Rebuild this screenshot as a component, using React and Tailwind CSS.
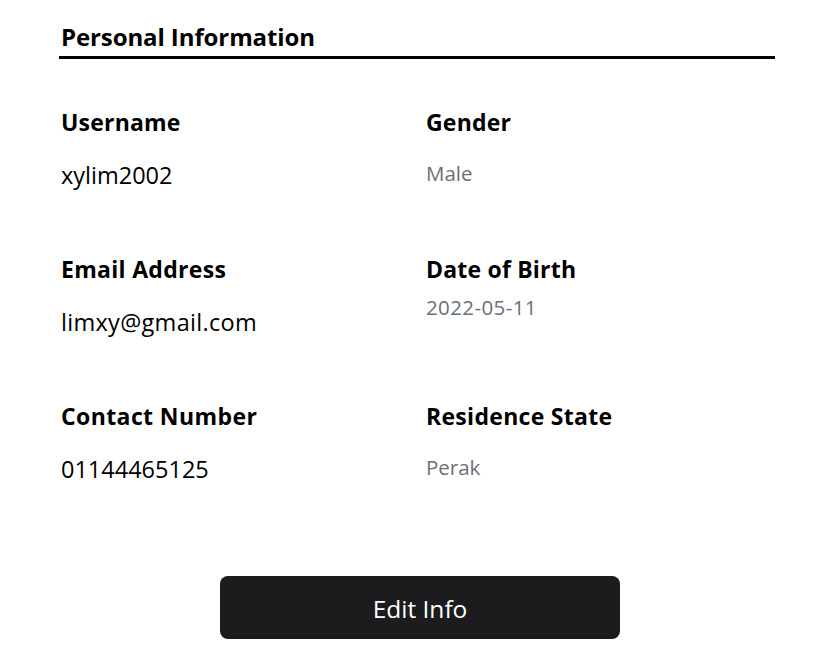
export default function App() {
  return (
    <div className="min-h-[657px] w-full bg-white text-black font-['Open_Sans',sans-serif]">
      <div className="ml-[59px] w-[716px] pt-[21px]">
        <div className="border-b-[3px] border-black pb-[3px]">
          <h2 className="pl-[2px] text-[24px] font-bold leading-[32px] tracking-[-0.1px]">Personal Information</h2>
        </div>
        <div className="mt-[48px] grid grid-cols-[365px_1fr] gap-y-[64px] pl-[2px]">
          <div className="flex flex-col">
            <div className="text-[23px] font-bold leading-[30px] tracking-[0.2px]">Username</div>
            <div className="mt-[23px] text-[23.5px] leading-[30px]">xylim2002</div>
          </div>
          <div className="flex flex-col">
            <div className="text-[23px] font-bold leading-[30px] tracking-[0.2px]">Gender</div>
            <div className="mt-[21px] text-[20.5px] leading-[30px] text-[#6b6f7b]">Male</div>
          </div>
          <div className="flex flex-col">
            <div className="text-[23px] font-bold leading-[30px] tracking-[0.3px]">Email Address</div>
            <div className="mt-[23px] text-[23.5px] leading-[30px] tracking-[0.3px]">limxy@gmail.com</div>
          </div>
          <div className="flex flex-col">
            <div className="text-[23px] font-bold leading-[30px] tracking-[0.2px]">Date of Birth</div>
            <div className="mt-[8px] text-[20.5px] leading-[30px] tracking-[0.4px] text-[#6b6f7b]">2022-05-11</div>
          </div>
          <div className="flex flex-col">
            <div className="text-[23px] font-bold leading-[30px] tracking-[0.4px]">Contact Number</div>
            <div className="mt-[23px] text-[23.5px] leading-[30px]">01144465125</div>
          </div>
          <div className="flex flex-col">
            <div className="text-[23px] font-bold leading-[30px] tracking-[0.3px]">Residence State</div>
            <div className="mt-[21px] text-[20.5px] leading-[30px] text-[#6b6f7b]">Perak</div>
          </div>
        </div>
      </div>
      <div className="ml-[220px] mt-[92px] flex h-[63px] w-[400px] items-center justify-center rounded-[8px] bg-[#1c1c1e] pt-[3px]">
        <span className="text-[24.5px] leading-[30px] text-white">Edit Info</span>
      </div>
    </div>
  );
}
